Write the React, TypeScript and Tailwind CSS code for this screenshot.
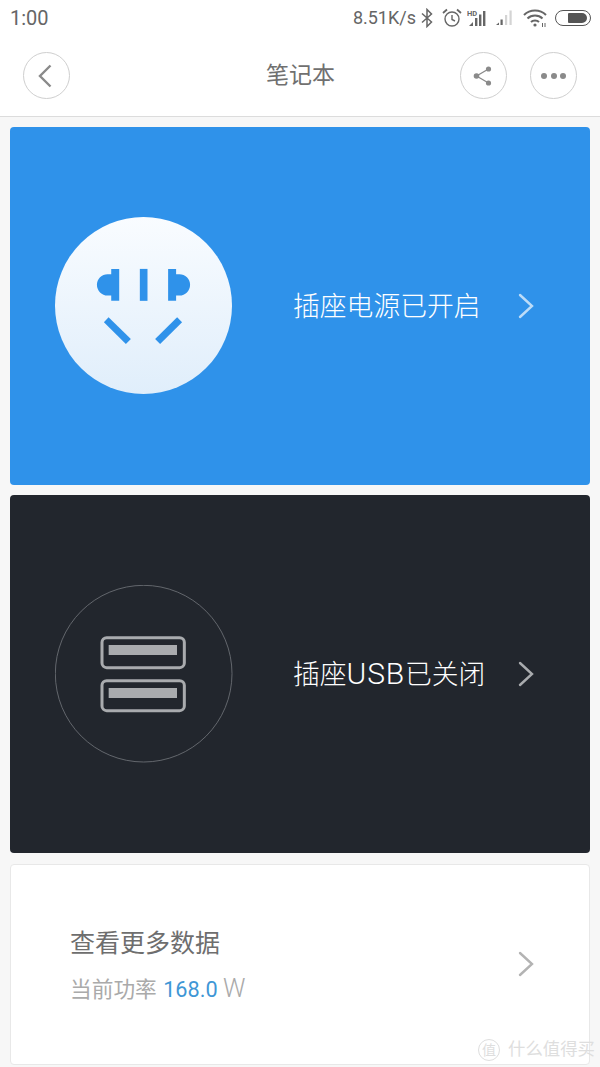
import { ReactNode } from 'react'

const CJK = "font-['Roboto','Noto_Sans_CJK_SC',sans-serif]"

function Chevron({ className }: { className: string }) {
  return (
    <svg width="16" height="26" viewBox="0 0 16 26" fill="none" className={className}>
      <path d="M2 2 L14 13 L2 24" stroke="currentColor" strokeWidth="2.4" strokeLinecap="round" strokeLinejoin="miter" />
    </svg>
  )
}

function RoundButton({ children }: { children: ReactNode }) {
  return (
    <button className="flex h-[47px] w-[47px] items-center justify-center rounded-full border border-[#cfcfcf] bg-white text-[#8a8a8a]">
      {children}
    </button>
  )
}

function StatusIcons() {
  return (
    <div className="flex items-center">
      {/* bluetooth */}
      <svg width="12" height="20" viewBox="0 0 12 20" fill="none" stroke="#666" strokeWidth="1.5" className="ml-[5px]">
        <path d="M1 5.5 L10.5 14 L6 18.5 V1.5 L10.5 6 L1 14.5" />
      </svg>
      {/* alarm */}
      <svg width="20" height="20" viewBox="0 0 20 20" fill="none" stroke="#666" strokeWidth="1.4" className="ml-[9px]">
        <circle cx="10" cy="11" r="7" />
        <path d="M10 7 V11.5 L13 13" />
        <path d="M1 5 L5 1.5 M19 5 L15 1.5" strokeWidth="1.8" />
      </svg>
      {/* HD signal */}
      <svg width="21" height="20" viewBox="0 0 21 20" className="ml-[5px]" fill="#666">
        <text x="0" y="7.5" fontSize="7.5" fontWeight="700" fontFamily="Roboto, sans-serif">HD</text>
        <path d="M2 18 L6 14 V18 Z" />
        <rect x="8" y="10" width="2.4" height="8" />
        <rect x="12" y="6.5" width="2.4" height="11.5" />
        <rect x="16" y="3" width="2.4" height="15" />
      </svg>
      {/* weak signal */}
      <svg width="18" height="18" viewBox="0 0 18 18" className="ml-[8px]">
        <path d="M0 16 L3 13.5 V16 Z" fill="#666" />
        <rect x="4.5" y="10.5" width="2.2" height="5.5" fill="#666" />
        <rect x="9" y="6" width="2.2" height="10" fill="#d4d4d4" />
        <rect x="13.5" y="1.5" width="2.2" height="14.5" fill="#d4d4d4" />
      </svg>
      {/* wifi */}
      <svg width="24" height="20" viewBox="0 0 24 20" fill="none" stroke="#666" strokeWidth="2" className="ml-[9px]">
        <path d="M1 7 C7 1 17 1 23 7" />
        <path d="M4.5 10.5 C8.5 6.5 15.5 6.5 19.5 10.5" />
        <path d="M8 14 C10 12 14 12 16 14" />
        <circle cx="12" cy="17" r="1.6" fill="#666" stroke="none" />
        <path d="M19.5 15 V19 M22 15 V19" strokeWidth="1" />
      </svg>
      {/* battery */}
      <div className="ml-[8px] flex h-[16px] w-[36px] items-center justify-end rounded-full border-[1.5px] border-[#555] pr-[3px]">
        <div className="h-[10px] w-[19px] rounded-r-[5px] rounded-l-[1px] bg-[#555]" />
      </div>
    </div>
  )
}

function PlugIcon() {
  return (
    <svg width="177" height="177" viewBox="44 36 532 532" className="mb-[1px] shrink-0">
      <defs>
        <linearGradient id="plugFace" x1="0" y1="0" x2="0" y2="1">
          <stop offset="0" stopColor="#f9fcff" />
          <stop offset="1" stopColor="#e0eefb" />
        </linearGradient>
      </defs>
      <circle cx="310" cy="302" r="266" fill="url(#plugFace)" />
      <g fill="#2f92ea">
        <path d="M237 192 H213 V208 H202 A32 32 0 0 0 202 272 H213 V288 H237 Z" />
        <rect x="299" y="192" width="23" height="96" />
        <path d="M384 192 H408 V208 H418 A32 32 0 0 1 418 272 H408 V288 H384 Z" />
        <polygon points="205,337 272,403 257,418 191,352" />
        <polygon points="411,337 426,352 360,418 345,403" />
      </g>
    </svg>
  )
}

function UsbIcon() {
  return (
    <svg width="178" height="178" viewBox="44 30 534 534" className="shrink-0">
      <circle cx="310" cy="296" r="265" fill="none" stroke="#6d7076" strokeWidth="2.6" />
      <g fill="none" stroke="#a9abae" strokeWidth="9">
        <rect x="185" y="188" width="247" height="90" rx="14" />
        <rect x="185" y="317" width="247" height="90" rx="14" />
      </g>
      <rect x="205" y="210" width="205" height="30" fill="#a9abae" />
      <rect x="205" y="339" width="205" height="30" fill="#a9abae" />
    </svg>
  )
}

export default function App() {
  return (
    <div className={`relative h-[1067px] w-[600px] overflow-hidden bg-[#f7f7f7] ${CJK}`}>
      {/* Header */}
      <div className="h-[117px] border-b border-[#dcdcdc] bg-white">
        <div className="flex h-[35px] items-center justify-between pl-[10px] pr-[9px] text-[20px] text-[#666]">
          <span>1:00</span>
          <div className="flex items-center">
            <span className="text-[18px]">8.51K/s</span>
            <StatusIcons />
          </div>
        </div>
        <div className="mt-[17px] flex items-center pl-[23px] pr-[23px]">
          <RoundButton>
            <svg width="14" height="24" viewBox="0 0 14 24" fill="none" className="mr-[3px]">
              <path d="M12.5 1.5 L2 12 L12.5 22.5" stroke="currentColor" strokeWidth="2.4" />
            </svg>
          </RoundButton>
          <div className="flex-1 pl-[71px] pt-[2px] text-center text-[23px] text-[#707070]">笔记本</div>
          <div className="flex gap-[23px]">
            <RoundButton>
              <svg width="24" height="24" viewBox="0 0 24 24" fill="currentColor" stroke="currentColor">
                <path d="M4.5 12 L16.5 5 M4.5 12 L16.5 19" strokeWidth="1.4" fill="none" />
                <circle cx="4.5" cy="12" r="2.8" stroke="none" />
                <circle cx="16.5" cy="5" r="2.6" stroke="none" />
                <circle cx="16.5" cy="19" r="2.6" stroke="none" />
              </svg>
            </RoundButton>
            <RoundButton>
              <div className="flex gap-[3.5px]">
                <span className="h-[6px] w-[6px] rounded-full bg-[#8a8a8a]" />
                <span className="h-[6px] w-[6px] rounded-full bg-[#8a8a8a]" />
                <span className="h-[6px] w-[6px] rounded-full bg-[#8a8a8a]" />
              </div>
            </RoundButton>
          </div>
        </div>
      </div>

      <div className="flex flex-col px-[10px] pt-[10px]">
        {/* Power */}
        <div className="flex h-[358px] items-center rounded-[4px] bg-[#2f92ea] pl-[45px] text-white">
          <PlugIcon />
          <div className="ml-[61px] w-[225px] whitespace-nowrap pt-[2px] text-[26.8px] font-light">插座电源已开启</div>
          <Chevron className="text-[#bcdcf8]" />
        </div>

        {/* USB */}
        <div className="mt-[10px] flex h-[358px] items-center rounded-[4px] bg-[#22262d] pl-[45px] text-white">
          <UsbIcon />
          <div className="ml-[60px] w-[225px] whitespace-nowrap pt-[2px] text-[26.8px] font-light">
            插座<span className="text-[30px] leading-none tracking-[0.8px]">USB</span>已关闭
          </div>
          <Chevron className="text-[#a9abae]" />
        </div>

        {/* Data */}
        <div className="mt-[11px] flex h-[201px] items-center rounded-[4px] border border-[#e8e8e8] bg-white pl-[59px]">
          <div className="w-[448px] pt-[5px]">
            <div className="text-[25px] leading-[32px] text-[#6e6e6e]">查看更多数据</div>
            <div className="mt-[13px] text-[21.7px] leading-[32px] text-[#aaa]">
              当前功率 <span className="ml-[1px] text-[#3f97d6]">168.0</span> <span className="text-[25px] font-light">W</span>
            </div>
          </div>
          <Chevron className="-mt-[1px] text-[#b3b3b3]" />
        </div>
      </div>

      {/* Watermark */}
      <div className="absolute left-[478px] top-[1039px] flex items-center text-[#dedede]">
        <span className="flex h-[22px] w-[22px] items-center justify-center rounded-full border border-[#dedede] text-[14px] leading-none">值</span>
        <span className="ml-[8px] whitespace-nowrap text-[17.4px] leading-none">什么值得买</span>
      </div>
    </div>
  )
}
